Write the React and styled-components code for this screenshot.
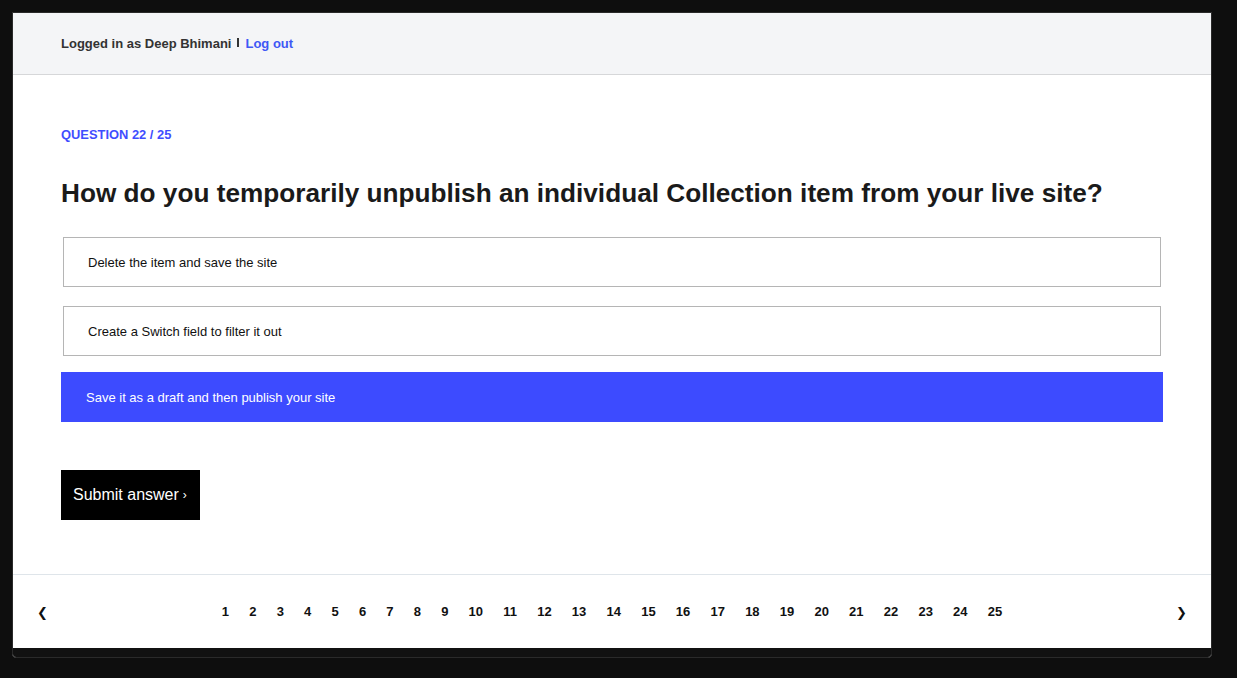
import React, { useState } from 'react'
import styled, { createGlobalStyle } from 'styled-components'

const answers = [
  'Delete the item and save the site',
  'Create a Switch field to filter it out',
  'Save it as a draft and then publish your site',
]

const pages = Array.from({ length: 25 }, (_, i) => i + 1)

export default function App() {
  const [selected, setSelected] = useState(2)

  return (
    <>
      <GlobalStyle />
      <Window>
        <Header>
          <UserName>Logged in as Deep Bhimani</UserName>
          <Divider />
          <LogOut href="#">Log out</LogOut>
        </Header>
        <Main>
          <QuestionLabel>Question 22 / 25</QuestionLabel>
          <Title>
            How do you temporarily unpublish an individual Collection item from your live site?
          </Title>
          <AnswerList>
            {answers.map((text, i) => (
              <Answer key={text} $active={i === selected} onClick={() => setSelected(i)}>
                {text}
              </Answer>
            ))}
          </AnswerList>
          <SubmitButton type="button">
            Submit answer <Chevron>›</Chevron>
          </SubmitButton>
        </Main>
        <Footer>
          <Arrow>❮</Arrow>
          <Pages>
            {pages.map((n) => (
              <PageNumber key={n}>{n}</PageNumber>
            ))}
          </Pages>
          <Arrow>❯</Arrow>
        </Footer>
        <BottomBar />
      </Window>
    </>
  )
}

const GlobalStyle = createGlobalStyle`
  body {
    margin: 0;
    background: #0e0e0e;
    font-family: "Liberation Sans", Arial, sans-serif;
  }
`

const Window = styled.div`
  box-sizing: border-box;
  width: 1200px;
  margin: 12px 0 0 12px;
  border: 1px solid #2a2a2a;
  border-radius: 0 0 4px 4px;
  background: #ffffff;
  overflow: hidden;
  display: flex;
  flex-direction: column;
`

const Header = styled.header`
  box-sizing: border-box;
  height: 62px;
  padding: 0 48px;
  display: flex;
  align-items: center;
  background: #f4f5f7;
  border-bottom: 1px solid #d6d7d9;
  font-size: 13px;
  font-weight: 700;
`

const UserName = styled.span`
  color: #333333;
`

const Divider = styled.span`
  display: inline-block;
  width: 2px;
  height: 9px;
  margin: -3px 6px 0 6px;
  background: #333333;
`

const LogOut = styled.a`
  color: #3f58f5;
  text-decoration: none;
`

const Main = styled.main`
  box-sizing: border-box;
  height: 499px;
  padding: 53px 48px 0;
  display: flex;
  flex-direction: column;
  align-items: flex-start;
`

const QuestionLabel = styled.div`
  font-size: 12.9px;
  line-height: 14px;
  font-weight: 700;
  text-transform: uppercase;
  color: #3f4dff;
`

const Title = styled.h1`
  margin: 35px 0 0;
  font-size: 26.2px;
  line-height: 32px;
  font-weight: 700;
  color: #1a1a1a;
`

const AnswerList = styled.div`
  align-self: stretch;
  margin-top: 28px;
  display: flex;
  flex-direction: column;
  gap: 19px;
`

const Answer = styled.div`
  box-sizing: border-box;
  height: 50px;
  margin: ${(p) => (p.$active ? '-3px 0 0' : '0 2px')};
  padding: 0 24px;
  display: flex;
  align-items: center;
  border: 1px solid ${(p) => (p.$active ? '#3d4bff' : '#b5b5b5')};
  background: ${(p) => (p.$active ? '#3d4bff' : '#ffffff')};
  color: ${(p) => (p.$active ? '#ffffff' : '#111111')};
  font-size: 13px;
  cursor: pointer;
`

const SubmitButton = styled.button`
  margin-top: 48px;
  height: 50px;
  padding: 0 13px 0 12px;
  border: none;
  background: #000000;
  color: #ffffff;
  font-family: inherit;
  font-size: 16px;
  display: flex;
  align-items: center;
  cursor: pointer;
`

const Chevron = styled.span`
  margin-left: 4px;
  font-size: 12px;
`

const Footer = styled.footer`
  box-sizing: border-box;
  height: 74px;
  padding: 2px 24px 0;
  border-top: 1px solid #dfe5ea;
  display: flex;
  align-items: center;
  justify-content: space-between;
`

const Arrow = styled.span`
  font-family: "DejaVu Sans", sans-serif;
  font-size: 13px;
  color: #111111;
  cursor: pointer;
`

const Pages = styled.nav`
  display: flex;
  align-items: center;
  margin-top: -2px;
`

const PageNumber = styled.span`
  padding: 0 10.1px;
  font-size: 13px;
  font-weight: 700;
  color: #111111;
  cursor: pointer;
`

const BottomBar = styled.div`
  height: 9px;
  background: #111111;
`
